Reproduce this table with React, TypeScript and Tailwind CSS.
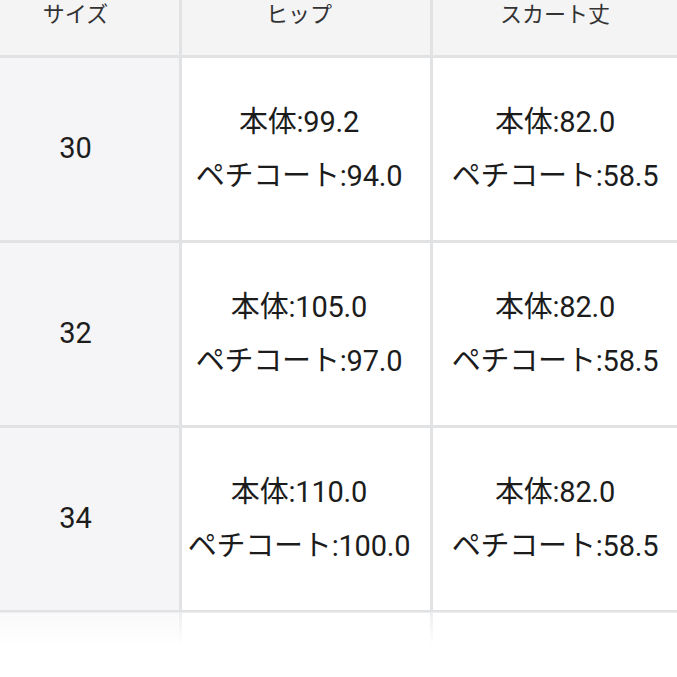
import React from "react";

const rows = [
  { size: "30", hip: ["本体:99.2", "ペチコート:94.0"], length: ["本体:82.0", "ペチコート:58.5"] },
  { size: "32", hip: ["本体:105.0", "ペチコート:97.0"], length: ["本体:82.0", "ペチコート:58.5"] },
  { size: "34", hip: ["本体:110.0", "ペチコート:100.0"], length: ["本体:82.0", "ペチコート:58.5"] },
];

const font = { fontFamily: '"Roboto", "Noto Sans CJK JP", sans-serif' };

function Lines({ lines, className }: { lines: string[]; className?: string }) {
  return (
    <div className={"flex h-[182px] flex-col items-center justify-center bg-white " + (className ?? "")}>
      {lines.map((l) => (
        <div key={l} className="text-[29px] leading-[54px] tracking-[-0.2px] text-[#1c1c1c]">
          {l}
        </div>
      ))}
    </div>
  );
}

export default function App() {
  return (
    <div className="relative h-[677px] w-[677px] overflow-hidden bg-white" style={font}>
      <div className="grid grid-cols-[179px_248px_1fr] gap-[3px] bg-[#e1e2e4]">
        {/* header */}
        <div className="flex h-[55px] justify-center bg-[#f4f4f5] pr-[28px] pt-[1px] text-[22px] leading-[28px] text-[#333]">
          サイズ
        </div>
        <div className="flex h-[55px] justify-center bg-[#f4f4f5] pr-[14px] pt-[1px] text-[22px] leading-[28px] text-[#333]">
          ヒップ
        </div>
        <div className="flex h-[55px] justify-center bg-[#f4f4f5] pt-[1px] text-[22px] leading-[28px] text-[#333]">
          スカート丈
        </div>

        {rows.map((r) => (
          <React.Fragment key={r.size}>
            <div className="flex h-[182px] items-center justify-center bg-[#f5f5f7] pr-[28px] text-[29px] text-[#1c1c1c]">
              {r.size}
            </div>
            <Lines lines={r.hip} className="pr-[14px]" />
            <Lines lines={r.length} />
          </React.Fragment>
        ))}

        {/* partially visible next row */}
        <div className="h-[80px] bg-[#f5f5f7]" />
        <div className="h-[80px] bg-white" />
        <div className="h-[80px] bg-white" />
      </div>

      {/* fade at bottom */}
      <div className="absolute inset-x-0 bottom-0 top-[612px] bg-gradient-to-b from-white/40 via-white to-white" />
    </div>
  );
}
